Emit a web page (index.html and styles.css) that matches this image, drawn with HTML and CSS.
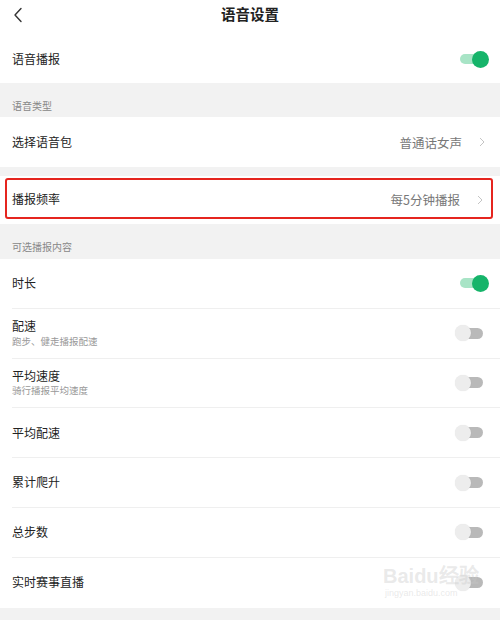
FILE: index.html
```html
<!DOCTYPE html>
<html lang="zh-CN">
<head>
<meta charset="utf-8">
<title>语音设置</title>
<link rel="stylesheet" href="styles.css">
</head>
<body>
<div class="page">
  <header class="header">
    <svg class="back" width="10" height="16" viewBox="0 0 10 16"><path d="M8 1.5 L2 8 L8 14.5" fill="none" stroke="#333" stroke-width="1.4" stroke-linecap="round" stroke-linejoin="round"/></svg>
    <div class="title">语音设置</div>
  </header>

  <div class="group">
    <div class="row row-top">
      <span class="label">语音播报</span>
      <span class="toggle on"><i class="track"></i><i class="thumb"></i></span>
    </div>
  </div>

  <div class="sec sec-1">语音类型</div>

  <div class="group">
    <div class="row">
      <span class="label">选择语音包</span>
      <span class="value">普通话女声<svg class="chev" width="6" height="10" viewBox="0 0 6 10"><path d="M1 1 L5 5 L1 9" fill="none" stroke="#c4c4c4" stroke-width="1"/></svg></span>
    </div>
  </div>

  <div class="gap"></div>

  <div class="group freq">
    <div class="highlight">
      <span class="label">播报频率</span>
      <span class="value">每5分钟播报<svg class="chev" width="6" height="10" viewBox="0 0 6 10"><path d="M1 1 L5 5 L1 9" fill="none" stroke="#c4c4c4" stroke-width="1"/></svg></span>
    </div>
  </div>

  <div class="sec sec-2">可选播报内容</div>

  <div class="group list">
    <div class="row item">
      <span class="label">时长</span>
      <span class="toggle on"><i class="track"></i><i class="thumb"></i></span>
    </div>
    <div class="row item">
      <span class="texts"><span class="label">配速</span><span class="sub">跑步、健走播报配速</span></span>
      <span class="toggle off"><i class="track"></i><i class="thumb"></i></span>
    </div>
    <div class="row item">
      <span class="texts"><span class="label">平均速度</span><span class="sub">骑行播报平均速度</span></span>
      <span class="toggle off"><i class="track"></i><i class="thumb"></i></span>
    </div>
    <div class="row item">
      <span class="label">平均配速</span>
      <span class="toggle off"><i class="track"></i><i class="thumb"></i></span>
    </div>
    <div class="row item">
      <span class="label">累计爬升</span>
      <span class="toggle off"><i class="track"></i><i class="thumb"></i></span>
    </div>
    <div class="row item">
      <span class="label">总步数</span>
      <span class="toggle off"><i class="track"></i><i class="thumb"></i></span>
    </div>
    <div class="row item last">
      <span class="label">实时赛事直播</span>
      <span class="toggle off"><i class="track"></i><i class="thumb"></i></span>
    </div>
  </div>

  <div class="watermark"><span class="wm-big">Bai<b>du</b>经验</span><span class="wm-small">jingyan.baidu.com</span></div>
</div>
</body>
</html>
```

FILE: styles.css
```css
html, body {
  margin: 0;
  padding: 0;
}
body {
  background: #f2f2f2;
  font-family: "Noto Sans CJK SC", "Noto Sans", sans-serif;
  color: #222;
}
.page {
  position: relative;
  width: 500px;
  height: 620px;
  overflow: hidden;
}
.header {
  position: relative;
  height: 34px;
  background: #fff;
  display: flex;
  align-items: center;
  justify-content: center;
}
.back {
  position: absolute;
  left: 13px;
  top: 7px;
}
.title {
  font-size: 14.5px;
  font-weight: 700;
  color: #222;
  line-height: 1;
  margin-top: -5px;
}
.group {
  background: #fff;
}
.row {
  display: flex;
  align-items: center;
  justify-content: space-between;
  height: 50px;
  padding: 0 11px 0 12px;
}
.row-top {
  height: 49px;
  padding-top: 1px;
  box-sizing: border-box;
}
.label {
  font-size: 12px;
  line-height: 1.2;
  color: #222;
}
.value {
  display: flex;
  align-items: center;
  font-size: 12.5px;
  color: #777;
}
.chev {
  margin-left: 17px;
  margin-right: 4px;
}
.sec {
  display: flex;
  align-items: center;
  padding-left: 12px;
  font-size: 10px;
  color: #888;
}
.sec-1 {
  height: 34px;
  padding-top: 10px;
  box-sizing: border-box;
}
.sec-2 {
  height: 35px;
  padding-top: 10px;
  box-sizing: border-box;
}
.gap {
  height: 9px;
}
.freq {
  height: 48px;
  padding: 2px 7px 0 5px;
  box-sizing: border-box;
}
.highlight {
  display: flex;
  align-items: center;
  justify-content: space-between;
  height: 41px;
  box-sizing: border-box;
  border: 2px solid #e5251f;
  border-radius: 3px;
  padding: 2px 4px 0 5px;
}
.item {
  height: 49.8px;
  box-sizing: border-box;
  border-bottom: 1px solid #efefef;
  margin-left: 12px;
  padding-left: 0;
}
.item.last {
  border-bottom: none;
}
.texts {
  display: flex;
  flex-direction: column;
}
.sub {
  font-size: 9.5px;
  color: #999;
  margin-top: 2px;
  line-height: 1.2;
}
.toggle {
  position: relative;
  width: 34px;
  height: 17px;
  flex: none;
}
.toggle i {
  position: absolute;
  display: block;
  border-radius: 999px;
}
.toggle.on .track {
  left: 5px;
  top: 3.5px;
  width: 20px;
  height: 10px;
  background: #a8e4c6;
}
.toggle.on .thumb {
  left: 17px;
  top: 0;
  width: 17px;
  height: 17px;
  background: #16b46a;
}
.toggle.off .track {
  left: 8px;
  top: 3px;
  width: 20px;
  height: 11px;
  background: #b9b9b9;
}
.toggle.off .thumb {
  left: 0;
  top: 0.5px;
  width: 16px;
  height: 16px;
  background: #ededed;
  box-shadow: 0 0 1px rgba(0,0,0,0.12);
}
.watermark {
  position: absolute;
  left: 383px;
  top: 566px;
  display: flex;
  flex-direction: column;
  color: rgba(200, 200, 200, 0.4);
  font-family: "Liberation Sans", sans-serif;
  pointer-events: none;
}
.wm-big {
  font-size: 20px;
  font-weight: 700;
  line-height: 1;
}
.wm-big b {
  font-weight: 700;
}
.wm-small {
  font-size: 9px;
  margin-top: 2px;
  margin-left: 2px;
}
```
